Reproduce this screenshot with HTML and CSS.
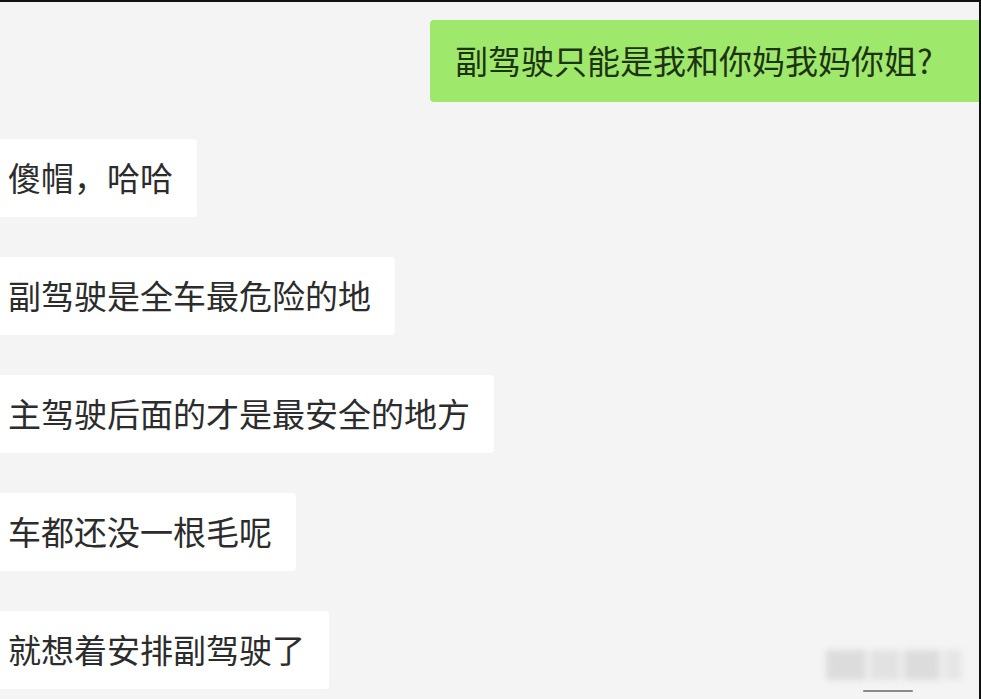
FILE: index.html
```html
<!DOCTYPE html>
<html lang="zh-CN">
<head>
<meta charset="utf-8">
<title>聊天</title>
<link rel="stylesheet" href="styles.css">
</head>
<body>
<div class="screen">
  <div class="chat">
    <div class="row row-me">
      <div class="bubble bubble-me">副驾驶只能是我和你妈我妈你姐?</div>
    </div>
    <div class="row row-other">
      <div class="bubble bubble-other">傻帽，哈哈</div>
    </div>
    <div class="row row-other">
      <div class="bubble bubble-other">副驾驶是全车最危险的地</div>
    </div>
    <div class="row row-other">
      <div class="bubble bubble-other">主驾驶后面的才是最安全的地方</div>
    </div>
    <div class="row row-other">
      <div class="bubble bubble-other">车都还没一根毛呢</div>
    </div>
    <div class="row row-other">
      <div class="bubble bubble-other">就想着安排副驾驶了</div>
    </div>
  </div>
  <div class="watermark">
    <div class="wm-blocks">
      <span class="wm-a"></span><span class="wm-b"></span><span class="wm-c"></span><span class="wm-d"></span>
    </div>
    <div class="wm-line"></div>
  </div>
</div>
</body>
</html>
```

FILE: styles.css
```css
html, body {
  margin: 0;
  padding: 0;
  background: #111;
}
.screen {
  position: relative;
  width: 979px;
  height: 697px;
  margin-top: 2px;
  background: #f4f4f4;
  overflow: hidden;
  font-family: "Noto Sans CJK SC", "Noto Sans", sans-serif;
}
.chat {
  display: flex;
  flex-direction: column;
  padding-top: 18px;
}
.row {
  display: flex;
}
.row-me {
  padding-left: 430px;
}
.row-other + .row-other {
  margin-top: 40px;
}
.row-me + .row-other {
  margin-top: 37px;
}
.bubble {
  border-radius: 4px;
  white-space: nowrap;
}
.bubble-me {
  flex: 1;
  height: 82px;
  line-height: 80px;
  padding-left: 25px;
  margin-right: -20px;
  background: #9ee86b;
  color: #1e3313;
  font-size: 33px;
}
.bubble-other {
  height: 78px;
  line-height: 77px;
  margin-left: -12px;
  padding: 0 24px 0 20px;
  background: #ffffff;
  color: #2c2c2c;
  font-size: 33px;
}
.watermark {
  position: absolute;
  left: 826px;
  top: 648px;
  width: 140px;
}
.wm-blocks {
  display: flex;
  gap: 4px;
  height: 30px;
  filter: blur(3px);
}
.wm-blocks span {
  display: block;
  background: #dcdcdc;
}
.wm-a { width: 40px; }
.wm-b { width: 30px; background: #e2e2e2 !important; }
.wm-c { width: 36px; }
.wm-d { width: 18px; background: #e6e6e6 !important; }
.wm-line {
  width: 50px;
  height: 2px;
  margin: 10px 0 0 37px;
  background: #8a8a8a;
  border-radius: 1px;
}
```
